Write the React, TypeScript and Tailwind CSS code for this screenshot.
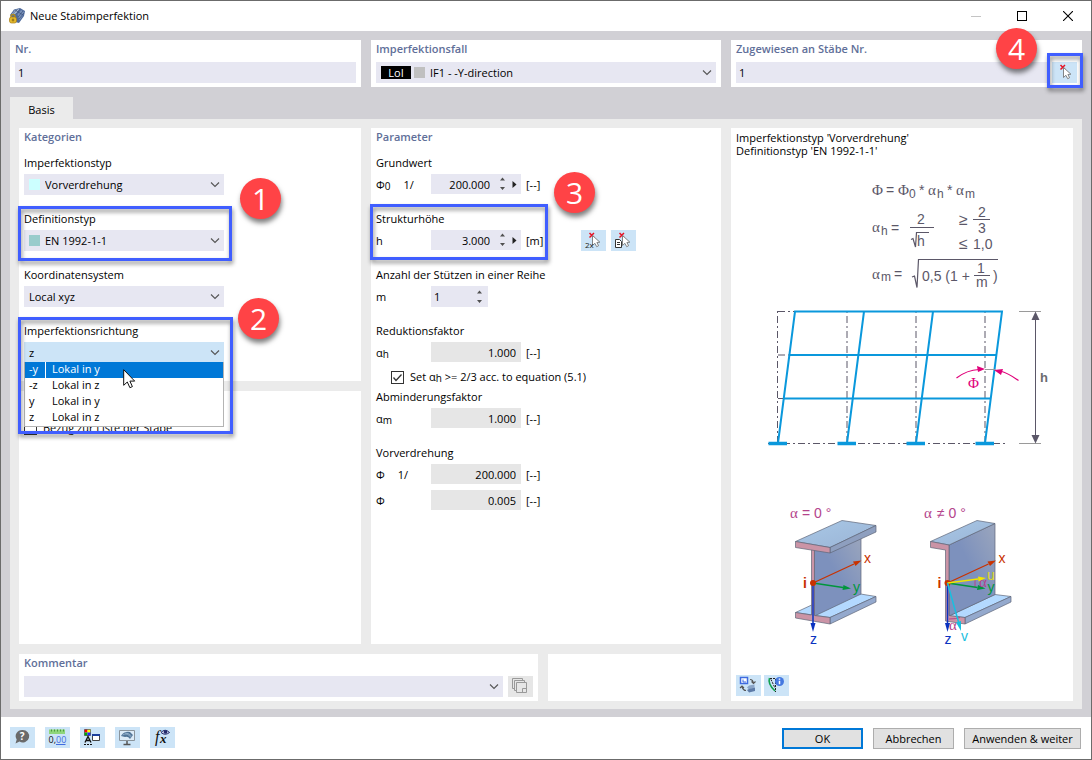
import type { ReactNode } from 'react';

const directions = [
  { key: '-y', label: 'Lokal in y' },
  { key: '-z', label: 'Lokal in z' },
  { key: 'y', label: 'Lokal in y' },
  { key: 'z', label: 'Lokal in z' },
];

function Chevron() {
  return (
    <svg className="pointer-events-none absolute right-1 top-1/2 h-[10px] w-[10px] -translate-y-1/2" viewBox="0 0 10 10" fill="none" stroke="#555" strokeWidth="1.1">
      <path d="M1 2.5 5 6.5 9 2.5" />
    </svg>
  );
}

interface SelectProps {
  id: string;
  value: string;
  swatch?: string;
  active?: boolean;
}

function Select({ id, value, swatch, active }: SelectProps) {
  return (
    <div className={`relative h-[21px] w-[200px] ${active ? 'bg-[#cce4f7]' : 'bg-[#e7e7f2]'}`}>
      {swatch && <span className={`pointer-events-none absolute left-[5px] top-[5px] h-[11px] w-[11px] ${swatch}`} />}
      <select id={id} className={`h-full w-full appearance-none bg-transparent pt-px outline-none ${swatch ? 'pl-[21px]' : 'pl-[5px]'}`}>
        <option>{value}</option>
      </select>
      <Chevron />
    </div>
  );
}

function Card({ title, className = '', children }: { title?: string; className?: string; children?: ReactNode }) {
  return (
    <section className={`bg-white px-[5px] ${className}`}>
      {title && <h2 className="h-[18px] font-semibold leading-[18px] text-[#5f6f99]">{title}</h2>}
      {children}
    </section>
  );
}

function Group({ label, htmlFor, children }: { label: string; htmlFor: string; children: ReactNode }) {
  return (
    <div className="relative mb-4">
      <label htmlFor={htmlFor} className="mb-[3px] block h-4 whitespace-nowrap leading-4">{label}</label>
      {children}
    </div>
  );
}

function Highlight({ className }: { className: string }) {
  return <div className={`pointer-events-none absolute z-20 border-[3px] border-[#405eff] drop-shadow-[1px_3px_2px_rgba(0,0,0,0.45)] ${className}`} />;
}

function Step({ n, className }: { n: number; className: string }) {
  return (
    <div className={`pointer-events-none absolute z-20 flex h-[41px] w-[41px] items-center justify-center rounded-full bg-[#ff4346] text-[30px] leading-none text-white shadow-[1px_4px_5px_rgba(0,0,0,0.5)] ${className}`}>
      {n}
    </div>
  );
}

function UpDown() {
  return (
    <button type="button" aria-label="Wert ändern" className="flex w-3 items-center justify-center">
      <svg className="h-[14px] w-[7px]" viewBox="0 0 7 14" fill="#505050">
        <path d="M3.5 0.5 6 3.5H1zM3.5 13 6 10H1z" />
      </svg>
    </button>
  );
}

function Spinner({ id, value }: { id: string; value: string }) {
  return (
    <div className="flex h-5 w-[90px] bg-[#e7e7f2] pr-px">
      <input id={id} defaultValue={value} className="mr-[6px] w-0 min-w-0 flex-1 bg-transparent text-right outline-none" />
      <UpDown />
      <button type="button" aria-label="Auswahl" className="flex w-3 items-center justify-center">
        <svg className="h-[7px] w-[5px]" viewBox="0 0 5 7" fill="#222">
          <path d="M0.5 0v7L4.5 3.5z" />
        </svg>
      </button>
    </div>
  );
}

function ReadOnly({ id, value }: { id: string; value: string }) {
  return <input id={id} readOnly value={value} className="h-5 w-[90px] bg-[#e6e6e6] pr-[5px] text-right outline-none" />;
}

function ParamRow({ symbol, prefix, unit, className = '', children }: { symbol: ReactNode; prefix?: string; unit?: string; className?: string; children: ReactNode }) {
  return (
    <div className={`flex h-[21px] items-start leading-[21px] ${className}`}>
      <span className="flex w-[55px] gap-[13px]">
        <span>{symbol}</span>
        {prefix && <span>{prefix}</span>}
      </span>
      {children}
      {unit && <span className="ml-[5px]">{unit}</span>}
    </div>
  );
}

function Sub({ children }: { children: ReactNode }) {
  return <span className="relative top-px text-[10px]">{children}</span>;
}

function IconButton({ label, className = 'bg-[#cce4f7]', children }: { label: string; className?: string; children: ReactNode }) {
  return (
    <button type="button" aria-label={label} className={`relative flex h-[21px] w-[25px] shrink-0 items-center justify-center ${className}`}>
      <svg className="h-[21px] w-[25px]" viewBox="0 0 25 21" fill="none">{children}</svg>
    </button>
  );
}

function PickArrow() {
  return (
    <>
      <path d="M8.5 3 13 7.5M13 3 8.5 7.5" stroke="#e81123" strokeWidth="1.5" />
      <path d="M11.5 5.5v10l2.4-2.2 1.8 3.4 1.9-1-1.7-3.2 3-.3z" fill="#fff" stroke="#777" strokeWidth="0.9" />
    </>
  );
}

function AppIcon() {
  return (
    <svg className="h-4 w-4" viewBox="0 0 16 16">
      <path d="M1 7 5 1.5 11 0l5 3-1 5-5 7-4-1z" fill="#4f6a9c" />
      <path d="M2.5 6.5 6 2l5-1.2L7.5 5.5z" fill="#a8bbd6" />
      <path d="M8.5 6.5 12 2l3 1.8-1 3.7-3.5 5z" fill="#7890b8" />
      <path d="M4 5.5 8.5 1.5M7 6 11 1M9 9l5-6M10 11l5-6M6 2l8 5" stroke="#2f4570" strokeWidth="0.6" fill="none" />
      <path d="M2 10V8.5a2 2 0 0 1 4 0V10" stroke="#b08c20" strokeWidth="1.4" fill="none" />
      <rect x="0.5" y="9" width="7" height="6" rx="2" fill="#e3b82c" stroke="#a67d14" strokeWidth="0.7" />
      <path d="M4 10.5v3M2.7 12h2.6" stroke="#7a5b0c" strokeWidth="0.8" />
    </svg>
  );
}

function Formulas() {
  return (
    <g fill="#5b5768" stroke="none" fontSize="14" className="font-['Liberation_Sans',Arial,sans-serif]">
      <g fontSize="15" className="font-['Liberation_Serif',serif]">
        <text x="872" y="195">Φ</text>
        <text x="898" y="195">Φ</text>
        <text x="928" y="195">α</text>
        <text x="956" y="195">α</text>
        <text x="872" y="232">α</text>
        <text x="872" y="279">α</text>
      </g>
      <text x="886" y="195">=</text>
      <text x="909" y="198" fontSize="12">0</text>
      <text x="919" y="195">*</text>
      <text x="937" y="198" fontSize="12">h</text>
      <text x="947" y="195">*</text>
      <text x="965" y="198" fontSize="12">m</text>

      <text x="881" y="235" fontSize="12">h</text>
      <text x="891" y="233">=</text>
      <text x="917" y="224">2</text>
      <text x="917" y="246">h</text>
      <text x="959" y="225" fontSize="16">≥</text>
      <text x="978" y="217">2</text>
      <text x="978" y="233">3</text>
      <text x="959" y="249" fontSize="16">≤</text>
      <text x="973" y="249">1,0</text>

      <text x="881" y="281" fontSize="12">m</text>
      <text x="894" y="279">=</text>
      <text x="922" y="281">0,5 (1 +</text>
      <text x="977" y="273">1</text>
      <text x="976" y="287">m</text>
      <text x="993" y="281">)</text>
      <g fill="none" stroke="#5b5768" strokeWidth="1.2">
        <path d="M910 227.5h24M973 219.5h17M974 275.5h16" />
        <path d="M911 239.5 913 238.500 915.500 247 916.500 232.500H929" />
        <path d="M912 277 914.500 276 917 287.500 918.500 259.500H998" />
      </g>
    </g>
  );
}

function Frame() {
  return (
    <g fill="none">
      <g stroke="#5b5768" strokeDasharray="7 3 2 3">
        <path d="M777.5 443V311M847 443V311M916 443V311M985 443V311" />
        <path d="M768 443.500H1007" />
        <path d="M778 311.500H795M778 355H789M778 398.500H784" />
      </g>
      <g stroke="#0a98dc" strokeWidth="2">
        <path d="M778 443 795 311.500H1002L985 443M847 443 864 311.500M916 443 933 311.500" />
        <path d="M789 355H996.500M783.500 398.500H991" />
        <path d="M768.500 443.500h18.500M837.500 443.500H856M906.500 443.500H925M975.500 443.500H994" strokeWidth="3.500" />
      </g>
      <path d="M1019 311.500h22M1019 443.500h22M985 369.500h10" stroke="#9a9a9a" />
      <path d="M1035.500 315v124" stroke="#5b5768" />
      <path d="M1035.500 311.500 1039.500 320H1031.500zM1035.500 443.500 1039.500 435H1031.500z" fill="#5b5768" />
      <path d="M956.500 378Q967 370 979 369.500M1018.500 380.500Q1008 373 1000 371" stroke="#e0007a" strokeWidth="1.200" />
      <path d="M985 369 977 366 978 372zM994 370 1003 369 1001 375z" fill="#e0007a" />
      <text x="1040" y="382" fontSize="13" fill="#6c6c70" className="font-['Liberation_Sans',Arial,sans-serif] font-bold">h</text>
      <text x="968" y="388" fontSize="15" fill="#e0007a" className="font-['Liberation_Serif',serif]">Φ</text>
    </g>
  );
}

function Axes() {
  return (
    <g>
      <path d="M813 583V623" stroke="#0a32c0" strokeWidth="1.500" />
      <path d="M813 632 810.500 623h5z" fill="#0a32c0" />
      <path d="M813 583 843 587.500" stroke="#00963c" strokeWidth="1.300" />
      <path d="M851 588.500 842.500 590 843.500 585z" fill="#00963c" />
      <path d="M813 583 854 564" stroke="#c83200" strokeWidth="1.300" />
      <path d="M861.500 560.500 855.500 566 853 561.500z" fill="#c83200" />
      <circle cx="813" cy="583" r="3" fill="#c83200" />
      <text x="803" y="588" fill="#c83200" className="font-bold">i</text>
      <text x="864" y="563" fill="#c83200">x</text>
      <text x="853" y="592" fill="#00963c">y</text>
      <text x="810" y="644" fill="#0a32c0">z</text>
    </g>
  );
}

function Beams() {
  return (
    <g fontSize="14" strokeLinejoin="round" className="font-['Liberation_Sans',Arial,sans-serif]">
      <defs>
        <linearGradient id="web" x1="0" y1="1" x2="1" y2="0">
          <stop offset="0.5" stopColor="#7d91bd" />
          <stop offset="1" stopColor="#9ba6bd" />
        </linearGradient>
        <linearGradient id="flange" x1="0" y1="0" x2="1" y2="1">
          <stop offset="0" stopColor="#a9c8e6" />
          <stop offset="1" stopColor="#9ab4d6" />
        </linearGradient>
      </defs>
      <g stroke="#5f6678" strokeWidth="0.7">
        <path d="M795.500 612.500 842 591 876 596.500 830 617.500z" fill="#b3d9ff" />
        <path d="M830 617.500 876 596.500V602L830 624z" fill="#94a9cd" />
        <path d="M814.500 549 861 536V594L814.500 616z" fill="url(#web)" />
        <path d="M795.500 612.500 811.500 615V549H814.500V615.500L830 617.500V624L795.500 618z" fill="#cb94a6" />
        <path d="M795.500 541.500 842 520.500 876 525.500 830 547.500z" fill="url(#flange)" />
        <path d="M830 547.500 876 525.500V532L830 553z" fill="#8e9fbf" />
        <path d="M795.500 541.500 830 547.500V553L795.500 547.500z" fill="#cb94a6" />

        <path d="M949 616 995 594.500 1011 596.500 965 617.500z" fill="#b3d9ff" />
        <path d="M965 617.500 1011 596.500V602L965 624z" fill="#94a9cd" />
        <path d="M949 545 995 523.500V594.500L949 616z" fill="url(#web)" />
        <path d="M930.500 541.500 977 520.500 995 523.500 949 545z" fill="url(#flange)" />
        <path d="M930.500 541.500 949 545V615.500L965 617.500V624L945.500 621V550L930.500 547.500z" fill="#cb94a6" />
      </g>
      <Axes />
      <path d="M975 580v7M949 619q7 0 11-1.500" fill="none" stroke="#b4448c" />
      <g transform="translate(134.500 0)">
        <Axes />
      </g>
      <path d="M947.500 583 978 579" stroke="#f0e600" strokeWidth="1.500" />
      <path d="M986 578 978 576.500 978.500 581.500z" fill="#f0e600" />
      <path d="M947.500 583 958.500 622" stroke="#18c0e0" strokeWidth="1.500" />
      <path d="M961 631 956 622.500 961 621z" fill="#18c0e0" />
      <text x="987" y="580" fill="#e0da20">u</text>
      <text x="961" y="641" fill="#18c0e0">v</text>
      <g fill="#b4448c" className="font-['Liberation_Serif',serif]" fontSize="15">
        <text x="979" y="587">α</text>
        <text x="949" y="630">α</text>
        <text x="790" y="518">α</text>
        <text x="924" y="518">α</text>
      </g>
      <g fill="#b4448c">
        <text x="802" y="518">= 0 °</text>
        <text x="937" y="518">≠ 0 °</text>
      </g>
    </g>
  );
}

function TitleBar() {
  return (
    <header className="flex h-[30px] items-center bg-white pl-2">
      <AppIcon />
      <h1 className="ml-[5px] flex-1">Neue Stabimperfektion</h1>
      <button type="button" aria-label="Minimieren" className="flex h-full w-[46px] items-center justify-center">
        <span className="h-px w-[10px] bg-[#c4c4c4]" />
      </button>
      <button type="button" aria-label="Maximieren" className="flex h-full w-[46px] items-center justify-center">
        <span className="h-[10px] w-[10px] border border-black" />
      </button>
      <button type="button" aria-label="Schließen" className="flex h-full w-[46px] items-center justify-center">
        <svg className="h-[10px] w-[10px]" viewBox="0 0 10 10" stroke="#000" strokeWidth="1.1">
          <path d="M0 0 10 10M10 0 0 10" />
        </svg>
      </button>
    </header>
  );
}

function Header() {
  return (
    <div className="grid grid-cols-[351fr_350fr_351fr] gap-[10px]">
      <Card title="Nr." className="h-[47px]">
        <input aria-label="Nr." defaultValue="1" className="mt-1 block h-[21px] w-full bg-[#e7e7f2] pl-[3px] outline-none" />
      </Card>
      <Card title="Imperfektionsfall" className="h-[47px]">
        <div className="relative mt-1 flex h-[21px] items-center bg-[#e7e7f2] pl-[5px]">
          <span className="h-[13px] w-[30px] bg-black text-center leading-[13px] text-white">LoI</span>
          <span className="ml-[3px] h-[11px] w-[11px] bg-[#c0c0c0]" />
          <select aria-label="Imperfektionsfall" className="h-full flex-1 appearance-none bg-transparent pl-[5px] pt-px outline-none">
            <option>IF1 - -Y-direction</option>
          </select>
          <Chevron />
        </div>
      </Card>
      <Card title="Zugewiesen an Stäbe Nr." className="h-[47px]">
        <div className="mt-1 flex gap-[5px]">
          <input aria-label="Zugewiesen an Stäbe Nr." defaultValue="1" className="h-[21px] min-w-0 flex-1 bg-[#e7e7f2] pl-[3px] outline-none" />
          <div className="relative">
            <IconButton label="Stäbe wählen">
              <PickArrow />
            </IconButton>
            <Highlight className="left-[-5px] top-[-9px] h-[35px] w-[36px]" />
            <Step n={4} className="left-[-56px] top-[-34px]" />
          </div>
        </div>
      </Card>
    </div>
  );
}

function Categories() {
  return (
    <div className="flex flex-col gap-[10px]">
      <Card title="Kategorien" className="pb-[2px]">
        <div className="mt-[9px] w-[200px]">
          <Group label="Imperfektionstyp" htmlFor="typ">
            <Select id="typ" value="Vorverdrehung" swatch="bg-[#ccffff]" />
          </Group>
          <Group label="Definitionstyp" htmlFor="def">
            <Select id="def" value="EN 1992-1-1" swatch="bg-[#99cccc]" />
            <Highlight className="left-[-6px] top-[-5px] h-[55px] w-[214px]" />
            <Step n={1} className="left-[216px] top-[-33px]" />
          </Group>
          <Group label="Koordinatensystem" htmlFor="koord">
            <Select id="koord" value="Local xyz" />
          </Group>
          <Group label="Imperfektionsrichtung" htmlFor="richtung">
            <Select id="richtung" value="z" active />
            <ul role="listbox" aria-label="Imperfektionsrichtung" className="absolute left-0 top-[39px] z-10 w-[200px] border border-t-0 border-[#b4b4b4] bg-white">
              {directions.map((d, i) => (
                <li key={d.key} role="option" aria-selected={i === 0} className={`flex h-4 leading-[14px] ${i === 0 ? 'bg-[#0078d7] text-white' : ''}`}>
                  <span className={`w-[21px] border-r pl-1 ${i === 0 ? 'border-white' : 'border-transparent'}`}>{d.key}</span>
                  <span className="pl-[6px]">{d.label}</span>
                </li>
              ))}
            </ul>
            <Highlight className="left-[-6px] top-[-6px] h-[117px] w-[215px]" />
            <Step n={2} className="left-[214px] top-[-25px]" />
            <svg className="pointer-events-none absolute left-[99px] top-[46px] z-20 h-[20px] w-[13px]" viewBox="0 0 13 20">
              <path d="M0.700 0.700v15.600l3.600-3.300 2.600 5.700 2.500-1.100-2.500-5.500h4.800z" fill="#fff" stroke="#111" strokeWidth="1" />
            </svg>
          </Group>
        </div>
      </Card>
      <Card className="flex-1 pt-[28px]">
        <label className="flex h-[18px] items-center gap-[6px]">
          <input type="checkbox" className="h-[13px] w-[13px] appearance-none border border-[#333] bg-white" />
          Bezug zur Liste der Stäbe
        </label>
      </Card>
    </div>
  );
}

function Parameters() {
  return (
    <Card title="Parameter">
      <div className="mt-[9px]">
        <Group label="Grundwert" htmlFor="phi0">
          <ParamRow symbol={<>Φ<Sub>0</Sub></>} prefix="1/" unit="[--]">
            <Spinner id="phi0" value="200.000" />
          </ParamRow>
        </Group>
        <Group label="Strukturhöhe" htmlFor="h">
          <ParamRow symbol="h" unit="[m]">
            <Spinner id="h" value="3.000" />
          </ParamRow>
          <div className="absolute left-[205px] top-[19px] flex gap-[5px]">
            <IconButton label="Zwei Punkte wählen">
              <PickArrow />
              <text x="4" y="17.500" fontSize="8" fill="#222">2x</text>
            </IconButton>
            <IconButton label="Aus Liste wählen">
              <PickArrow />
              <path d="M4.500 9.500h4l2 2v6h-6z" fill="#fff" stroke="#333" />
              <path d="M6 12.500h3M6 14.500h3" stroke="#333" />
            </IconButton>
          </div>
          <Highlight className="left-[-6px] top-[-7px] h-[56px] w-[178px]" />
          <Step n={3} className="left-[178px] top-[-39px]" />
        </Group>
        <Group label="Anzahl der Stützen in einer Reihe" htmlFor="m">
          <ParamRow symbol="m">
            <div className="flex h-[21px] w-[57px] bg-[#e7e7f2] pr-[3px]">
              <input id="m" defaultValue="1" className="w-0 min-w-0 flex-1 bg-transparent pl-[3px] outline-none" />
              <UpDown />
            </div>
          </ParamRow>
        </Group>
        <div>
          <label htmlFor="alphah" className="mb-[3px] block h-4 leading-4">Reduktionsfaktor</label>
          <ParamRow symbol={<>α<Sub>h</Sub></>} unit="[--]">
            <ReadOnly id="alphah" value="1.000" />
          </ParamRow>
          <label className="mb-[3px] ml-[15px] mt-[5px] flex h-[18px] items-center gap-[6px]">
            <span className="relative flex">
              <input type="checkbox" defaultChecked className="h-[13px] w-[13px] appearance-none border border-[#333] bg-white" />
              <svg className="pointer-events-none absolute left-0 top-0 h-[13px] w-[13px]" viewBox="0 0 13 13" fill="none" stroke="#333" strokeWidth="1.300">
                <path d="M2.500 6.500 5 9.500 10.500 3.500" />
              </svg>
            </span>
            <span>Set α<Sub>h</Sub> &gt;= 2/3 acc. to equation (5.1)</span>
          </label>
        </div>
        <Group label="Abminderungsfaktor" htmlFor="alpham">
          <ParamRow symbol={<>α<Sub>m</Sub></>} unit="[--]">
            <ReadOnly id="alpham" value="1.000" />
          </ParamRow>
        </Group>
        <Group label="Vorverdrehung" htmlFor="phi">
          <ParamRow symbol="Φ" prefix="1/" unit="[--]">
            <ReadOnly id="phi" value="200.000" />
          </ParamRow>
          <ParamRow symbol={<label htmlFor="phirad">Φ</label>} unit="[--]" className="mt-[5px]">
            <ReadOnly id="phirad" value="0.005" />
          </ParamRow>
        </Group>
      </div>
    </Card>
  );
}

function Preview() {
  return (
    <section className="flex flex-col bg-white px-[5px] pb-[5px] pt-[3px]">
      <p className="leading-[13px]">
        Imperfektionstyp 'Vorverdrehung'
        <br />
        Definitionstyp 'EN 1992-1-1'
      </p>
      <svg className="mt-[3px] h-[490px] w-full" viewBox="736 160 332 490" fill="none">
        <Formulas />
        <Frame />
        <Beams />
      </svg>
      <div className="mt-auto flex gap-[3px]">
        <IconButton label="Ansicht wechseln">
          <path d="M4.500 2.500h7v6h-7z" fill="#fff" stroke="#3f6be0" strokeWidth="1.500" />
          <path d="M7 4.500v2.500h3" stroke="#3f6be0" />
          <path d="M14 4.500q3 0 3.500 4M15.500 6.500l2 2 2-2M10 15.500q-3 0-4-4M4 13l2-2 2 2" stroke="#555" strokeWidth="1.100" />
          <path d="M11 12.500 13 10.500 18.500 9.500v3L13 14.500z" fill="#8ba6c9" />
          <path d="M13 14 19 12.500V16L13 17.500 11 15z" fill="#5d7ba8" />
        </IconButton>
        <IconButton label="Information">
          <path d="M5.500 3Q3.500 9 11 16" stroke="#12a050" strokeWidth="1.600" />
          <path d="M7 4.500 11 13M6 3.500h6M11.500 4v13" stroke="#222" strokeDasharray="2 1" />
          <circle cx="15.500" cy="6.500" r="4.500" fill="#4478e0" />
          <path d="M15.500 5.800v3.500M15.500 3.500v1.300" stroke="#fff" strokeWidth="1.500" />
        </IconButton>
      </div>
    </section>
  );
}

function Comment() {
  return (
    <div className="grid grid-cols-[519fr_173fr] gap-[10px]">
      <Card title="Kommentar" className="h-[47px]">
        <div className="mt-1 flex gap-[5px]">
          <div className="relative h-[21px] flex-1 bg-[#e7e7f2]">
            <select aria-label="Kommentar" className="h-full w-full appearance-none bg-transparent outline-none" />
            <Chevron />
          </div>
          <IconButton label="Kommentar übernehmen" className="bg-[#e6e6e6]">
            <path d="M6 12.500H4.500v-10h10V4M8 14.500H6.500v-10h10V6" stroke="#999" />
            <path d="M8.500 6.500h10v10h-10zM14.500 16v-3.500h4" stroke="#999" />
          </IconButton>
        </div>
      </Card>
      <Card />
    </div>
  );
}

function Footer() {
  return (
    <footer className="flex h-[42px] items-center justify-between bg-white pl-[9px] pr-[10px]">
      <div className="flex gap-[10px] pb-px">
        <IconButton label="Hilfe">
          <path d="M12.500 3a6.500 6.200 0 1 1-3 11.600L5.500 16.500l1.200-4A6.500 6.200 0 0 1 12.500 3z" fill="#6a6a6a" />
          <text x="9.700" y="13" fontSize="10" fill="#fff" className="font-bold">?</text>
        </IconButton>
        <IconButton label="Einheiten">
          <path d="M4 2.500h16v4.500H4z" fill="#8fd67c" />
          <path d="M6.500 2.500v2M9.500 2.500v2M12.500 2.500v2M15.500 2.500v2M18.500 2.500v2" stroke="#4a9a3c" />
          <text x="3.500" y="15.500" fontSize="9" fill="#111">0,</text>
          <text x="11" y="15.500" fontSize="9" fill="#3f6be0">00</text>
          <path d="M11 17.500h9.500" stroke="#3f6be0" />
        </IconButton>
        <IconButton label="Anzeige">
          <path d="M4.500 2.500h3v3h-3z" fill="#f00" />
          <path d="M7.500 2.500h3v3h-3z" fill="#ff0" />
          <path d="M4.500 5.500h3v3h-3z" fill="#0a0" />
          <path d="M7.500 5.500h3v3h-3z" fill="#22f" />
          <path d="M4.500 2.500h6v6h-6z" stroke="#222" strokeWidth="0.500" />
          <path d="M5 15.500 8 9.500l3 6M6 13.500h4" stroke="#111" strokeWidth="1.300" />
          <path d="M4 17.500h9" stroke="#111" strokeDasharray="2 1" />
          <path d="M12.500 7.500h7v6h-7z" fill="#fff" stroke="#444" />
          <path d="M12 8h8" stroke="#1b3f9c" strokeWidth="2" />
        </IconButton>
        <IconButton label="Bildschirm">
          <path d="M4.500 3.500h15v10h-15z" stroke="#8a949c" fill="#dcebf7" />
          <path d="M6 9Q9 4 15 5l3 3-3 4q-2-3-5-2z" fill="#4f7396" />
          <path d="M7.500 8q5-3 8.500 2.500M10 6q4 0 6.500 3" stroke="#a9c4dc" strokeWidth="0.700" />
          <path d="M12 14v3M8.500 17.500h7" stroke="#555" strokeWidth="1.500" />
        </IconButton>
        <IconButton label="Formeln">
          <text x="5" y="15" fontSize="16" fill="#111" className="font-['Liberation_Serif',serif] italic">f</text>
          <text x="10" y="16" fontSize="13" fill="#111" className="font-['Liberation_Serif',serif] font-bold italic">x</text>
          <path d="M11 5.500Q15 1 19.500 5.500 15 9 11 5.500z" fill="#cfd6f0" stroke="#232a6b" />
          <circle cx="15.500" cy="5" r="1.800" fill="#232a6b" />
        </IconButton>
      </div>
      <div className="flex gap-[10px]">
        <button type="button" className="h-[21px] w-[81px] border-2 border-[#0078d7] bg-[#e1e1e1] leading-[17px]">OK</button>
        <button type="button" className="h-[21px] w-[81px] border border-[#adadad] bg-[#e1e1e1] leading-[19px]">Abbrechen</button>
        <button type="button" className="h-[21px] w-[117px] whitespace-nowrap border border-[#adadad] bg-[#e1e1e1] leading-[19px]">Anwenden &amp; weiter</button>
      </div>
    </footer>
  );
}

export default function App() {
  return (
    <div className="flex min-h-screen flex-col border border-[#6b6b6b] bg-white font-['Open_Sans','Noto_Sans',sans-serif] text-[11px] text-black">
      <TitleBar />
      <main className="flex flex-1 flex-col bg-[#d1d0d5] px-[9px] pb-2 pt-[9px]">
        <Header />
        <div role="tablist" className="mt-[10px] flex">
          <button type="button" role="tab" aria-selected="true" className="h-[22px] w-[63px] bg-[#ebebeb] pt-1">Basis</button>
        </div>
        <div className="grid flex-1 grid-cols-[702fr_342fr] gap-[10px] bg-[#ebebeb] px-[9px] pb-2 pt-[9px]">
          <div className="flex flex-col gap-[10px]">
            <div className="grid flex-1 grid-cols-[342fr_350fr] gap-[10px]">
              <Categories />
              <Parameters />
            </div>
            <Comment />
          </div>
          <Preview />
        </div>
      </main>
      <Footer />
    </div>
  );
}
